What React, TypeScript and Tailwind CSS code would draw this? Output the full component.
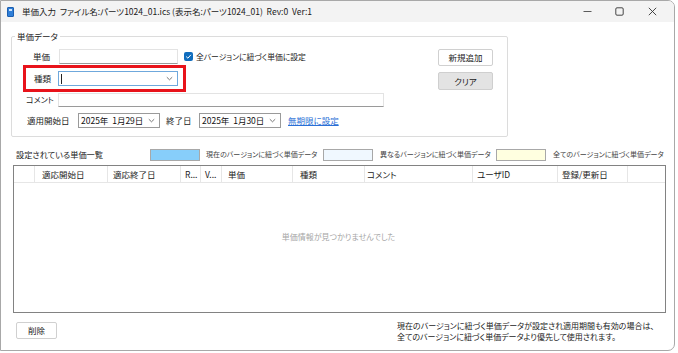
import React from "react";

const FONT = "font-['Noto_Sans_CJK_JP','Noto_Sans',sans-serif] [font-feature-settings:'palt']";

function Chevron() {
  return (
    <svg width="7" height="5" viewBox="0 0 7 5" className="shrink-0">
      <polyline points="0.8,1.2 3.5,3.8 6.2,1.2" fill="none" stroke="#555" strokeWidth="0.8" />
    </svg>
  );
}

function DateBox({ text }: { text: string }) {
  return (
    <div className="w-[82px] h-[15px] border border-[#9a9a9a] bg-white flex items-center pl-[2px] pr-[4px] justify-between">
      <span className="text-[8.5px] leading-none text-[#111] whitespace-pre">{text}</span>
      <Chevron />
    </div>
  );
}

const cols: { w: number; label: string; pl: number }[] = [
  { w: 21, label: "", pl: 0 },
  { w: 73, label: "適応開始日", pl: 7 },
  { w: 73, label: "適応終了日", pl: 5 },
  { w: 20, label: "R...", pl: 4 },
  { w: 21, label: "V...", pl: 4 },
  { w: 71, label: "単価", pl: 6 },
  { w: 72, label: "種類", pl: 7 },
  { w: 108, label: "コメント", pl: 2 },
  { w: 85, label: "ユーザID", pl: 4 },
  { w: 70, label: "登録/更新日", pl: 4 },
];

export default function App() {
  return (
    <div className={`w-[678px] h-[353px] bg-white ${FONT} text-[#1a1a1a]`}>
      <div className="w-[675px] h-[351px] border border-[#a8a8a8] rounded-tr-[7px] rounded-br-[7px] overflow-hidden flex flex-col bg-white">
        {/* Title bar */}
        <div className="h-[21px] bg-[#f3f3f3] flex items-center shrink-0">
          <div className="ml-[6px] w-[7px] h-[10px] rounded-[1px] bg-[#2f7fd8] border border-[#1c5fb0] flex items-start justify-center">
            <div className="mt-[1px] w-[3px] h-[2px] bg-[#cfe4fb]" />
          </div>
          <span className="ml-[8px] text-[8.5px] leading-none text-[#1a1a1a] whitespace-nowrap">
            単価入力&nbsp;&nbsp;ファイル名:パーツ1024_01.ics (表示名:パーツ1024_01)&nbsp;&nbsp;Rev:0&nbsp;&nbsp;Ver:1
          </span>
          <div className="ml-auto flex items-center">
            <div className="w-[32px] flex justify-center">
              <svg width="9" height="9" viewBox="0 0 9 9">
                <line x1="0.5" y1="4.5" x2="8.5" y2="4.5" stroke="#333" strokeWidth="0.8" />
              </svg>
            </div>
            <div className="w-[32px] flex justify-center">
              <svg width="9" height="9" viewBox="0 0 9 9">
                <rect x="0.8" y="0.8" width="7.4" height="7.4" rx="1.2" fill="none" stroke="#333" strokeWidth="0.9" />
              </svg>
            </div>
            <div className="w-[34px] mr-[5px] flex justify-center">
              <svg width="9" height="9" viewBox="0 0 9 9">
                <line x1="0.8" y1="0.8" x2="8.2" y2="8.2" stroke="#333" strokeWidth="0.9" />
                <line x1="8.2" y1="0.8" x2="0.8" y2="8.2" stroke="#333" strokeWidth="0.9" />
              </svg>
            </div>
          </div>
        </div>

        {/* Body */}
        <div className="flex flex-col flex-1">
          {/* Group box */}
          <div className="relative ml-[10px] mt-[14px] w-[497px] h-[101px] border border-[#dcdcdc] rounded-[2px] flex">
            <span className="absolute left-[3px] top-[-6px] bg-white px-[2px] text-[8.5px] leading-[11px] text-[#1a1a1a]">単価データ</span>
            <div className="flex-1 flex flex-col">
              {/* Row 1 */}
              <div className="mt-[12px] h-[15px] flex items-center">
                <span className="ml-[21px] w-[26px] text-[8.5px] leading-none">単価</span>
                <div className="w-[119px] h-[15px] bg-white border border-[#e3e3e3] border-b-[#9a9a9a]" />
                <div className="ml-[6px] w-[9px] h-[9px] rounded-[2px] bg-[#0f6cbd] flex items-center justify-center">
                  <svg width="7" height="7" viewBox="0 0 7 7">
                    <polyline points="1.2,3.6 2.9,5.2 5.9,1.8" fill="none" stroke="white" strokeWidth="1" />
                  </svg>
                </div>
                <span className="ml-[3px] text-[7.8px] leading-none whitespace-nowrap">全バージョンに紐づく単価に設定</span>
              </div>
              {/* Row 2 (highlighted) */}
              <div className="mt-[1px] ml-[11px] w-[163px] h-[27px] border-[3px] border-[#e8131b] flex items-center">
                <span className="ml-[8px] w-[24px] text-[8.5px] leading-none">種類</span>
                <div className="w-[120px] h-[15px] bg-white border border-[#6fa8dc] flex items-center justify-between pl-[2px] pr-[4px]">
                  <div className="w-[0.8px] h-[10px] bg-[#222]" />
                  <Chevron />
                </div>
              </div>
              {/* Row 3 */}
              <div className="mt-[1px] h-[14px] flex items-center">
                <span className="ml-[14px] w-[32px] text-[8px] leading-none whitespace-nowrap">コメント</span>
                <div className="w-[326px] h-[14px] bg-white border border-[#e3e3e3] border-b-[#9a9a9a]" />
              </div>
              {/* Row 4 */}
              <div className="mt-[6px] h-[15px] flex items-center">
                <span className="ml-[15px] w-[51px] text-[8.5px] leading-none whitespace-nowrap">適用開始日</span>
                <DateBox text="2025年  1月29日" />
                <span className="ml-[6px] w-[33px] text-[8.5px] leading-none whitespace-nowrap">終了日</span>
                <DateBox text="2025年  1月30日" />
                <span className="ml-[7px] text-[8.5px] leading-none text-[#2a6fd6] underline whitespace-nowrap">無期限に設定</span>
              </div>
            </div>
            <div className="w-[55px] mr-[14px] mt-[12px] flex flex-col gap-[6px]">
              <div className="h-[17px] border border-[#d0d0d0] rounded-[2px] bg-white flex items-center justify-center text-[8.5px] leading-none">新規追加</div>
              <div className="h-[18px] border border-[#cfcfcf] rounded-[2px] bg-[#e3e3e3] flex items-center justify-center text-[8.5px] leading-none">クリア</div>
            </div>
          </div>

          {/* List header with legend */}
          <div className="mt-[11px] h-[13px] flex items-center">
            <span className="ml-[15px] w-[134px] text-[8.2px] leading-none whitespace-nowrap">設定されている単価一覧</span>
            <div className="w-[173px] flex items-center">
              <div className="w-[50px] h-[12px] bg-[#87cefa] border border-[#a8a8a8]" />
              <span className="ml-[6px] text-[7px] leading-none text-[#444] whitespace-nowrap">現在のバージョンに紐づく単価データ</span>
            </div>
            <div className="w-[173px] flex items-center">
              <div className="w-[50px] h-[12px] bg-[#f0f8ff] border border-[#a8a8a8]" />
              <span className="ml-[7px] text-[7px] leading-none text-[#444] whitespace-nowrap">異なるバージョンに紐づく単価データ</span>
            </div>
            <div className="w-[173px] flex items-center">
              <div className="w-[50px] h-[12px] bg-[#ffffe0] border border-[#a8a8a8]" />
              <span className="ml-[7px] text-[7px] leading-none text-[#444] whitespace-nowrap">全てのバージョンに紐づく単価データ</span>
            </div>
          </div>

          {/* Table */}
          <div className="mt-[4px] ml-[12px] w-[653px] h-[148px] border border-[#828282] flex flex-col bg-white">
            <div className="h-[17px] flex border-b border-[#e6e6e6] shrink-0">
              {cols.map((c, i) => (
                <div
                  key={i}
                  style={{ width: c.w, paddingLeft: c.pl }}
                  className="h-full border-r border-[#e6e6e6] flex items-center text-[8.5px] leading-none whitespace-nowrap overflow-hidden shrink-0"
                >
                  {c.label}
                </div>
              ))}
              <div className="flex-1" />
            </div>
            <div className="flex-1 flex justify-center pt-[50px]">
              <span className="text-[8px] leading-none text-[#a6a6a6] [margin-left:-2px]">単価情報が見つかりませんでした</span>
            </div>
          </div>

          {/* Bottom */}
          <div className="mt-[9px] flex items-start">
            <div className="ml-[15px] w-[41px] h-[17px] border border-[#d0d0d0] rounded-[2px] bg-white flex items-center justify-center text-[8.5px] leading-none">削除</div>
            <div className="ml-[340px] -mt-[2px] text-[8px] leading-[11px] text-[#1a1a1a] whitespace-nowrap">
              <div>現在のバージョンに紐づく単価データが設定され適用期間も有効の場合は、</div>
              <div>全てのバージョンに紐づく単価データより優先して使用されます。</div>
            </div>
          </div>
        </div>
      </div>
    </div>
  );
}
